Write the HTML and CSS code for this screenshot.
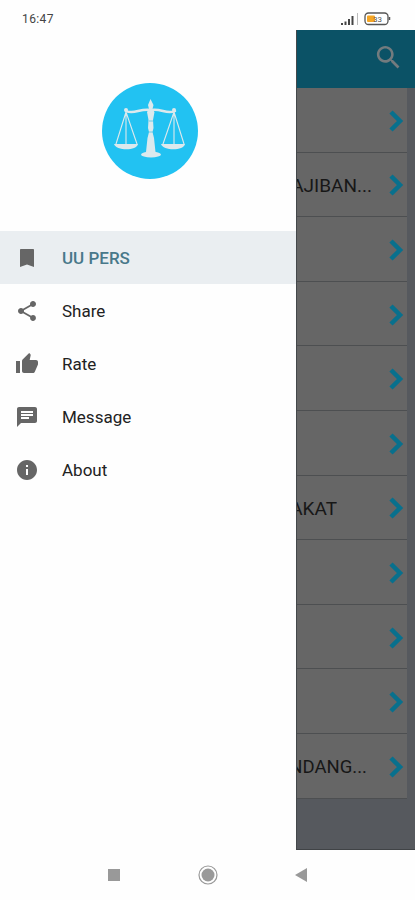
FILE: index.html
```
<!DOCTYPE html>
<html lang="id">
<head>
<meta charset="utf-8">
<title>UU PERS</title>
<link rel="stylesheet" href="styles.css">
</head>
<body>
<div class="status"><span class="time">16:47</span>
<svg class="status-icons" width="54" height="16" viewBox="0 0 54 16">
<g fill="#444"><path d="M2 12h2v2H2z"/><path d="M5.500 10.500h2V14h-2z"/><path d="M9 8h2v6H9z"/><path d="M12.500 5h2v9h-2z"/></g><path d="M18.500 2v12" stroke="#bbb"/>
<rect x="26" y="2" width="23" height="11.500" rx="3.500" fill="#fff" stroke="#555" stroke-width="1.300"/><path d="M50.500 6v3" stroke="#555" stroke-width="1.500"/>
<rect x="28" y="4.500" width="8" height="6.500" rx="1" fill="#f5a623"/><text x="34" y="11" class="charge">33</text></svg>
</div>
<div class="main">
<nav class="drawer">
<div class="brand">
<svg width="96" height="96" viewBox="0 0 96 96"><circle cx="48" cy="48" r="48" fill="#22c2f2"/>
<g fill="none" stroke="#dce9ed" stroke-linecap="round"><path d="M24 28c8 4 14-3 25-1 10-2 16 5 24 1" stroke-width="2.500"/><path d="M24 29L14 61M24 29v32M24 29l11 32M72 29L61 61M72 29v32M72 29l10 32" stroke-width="1.100"/></g>
<g fill="#dce9ed"><circle cx="24" cy="27" r="2"/><circle cx="72" cy="27" r="2"/><path d="M12 61h24c-1 7-22 7-24 0zM59 61h24c-1 7-22 7-24 0z"/><path d="M48.500 16l3 6-1 4 2 3-1.500 8 .5 8-1 4 1.500 6 1.500 14h-9.500l1.500-14 1.500-6-1-4 .5-8-1.500-8 2-3-1-4z"/><ellipse cx="49" cy="71.500" rx="10" ry="3"/></g>
<path d="M47 38h4M47 49h4" stroke="#6bcce9"/></svg>
</div>
<div class="item active"><svg class="icon" viewBox="0 0 24 24"><path d="M18 3H6c-.6 0-1 .4-1 1v17l7-2.500 7 2.500V4c0-.6-.4-1-1-1z"/></svg><span>UU PERS</span></div>
<div class="item"><svg class="icon" viewBox="0 0 24 24"><path d="M18 16.080c-.76 0-1.440.3-1.960.77L8.910 12.700c.05-.23.09-.46.09-.7s-.04-.47-.09-.7l7.050-4.110c.54.5 1.250.81 2.040.81 1.660 0 3-1.340 3-3s-1.340-3-3-3-3 1.340-3 3c0 .24.04.47.09.7L8.040 9.810C7.500 9.310 6.790 9 6 9c-1.660 0-3 1.340-3 3s1.340 3 3 3c.79 0 1.500-.31 2.040-.81l7.120 4.160c-.05.21-.08.43-.08.65 0 1.610 1.310 2.920 2.920 2.920s2.920-1.310 2.920-2.920-1.310-2.920-2.920-2.920z"/></svg><span>Share</span></div>
<div class="item"><svg class="icon" viewBox="0 0 24 24"><path d="M1 21h4V9H1v12zm22-11c0-1.100-.9-2-2-2h-6.310l.95-4.570.03-.32c0-.41-.17-.79-.44-1.060L14.170 1 7.590 7.590C7.220 7.950 7 8.450 7 9v10c0 1.100.9 2 2 2h9c.83 0 1.540-.5 1.840-1.220l3.020-7.050c.09-.23.14-.47.14-.73v-2z"/></svg><span>Rate</span></div>
<div class="item"><svg class="icon" viewBox="0 0 24 24"><path d="M20 2H4c-1.100 0-1.990.9-1.990 2L2 22l4-4h14c1.100 0 2-.9 2-2V4c0-1.100-.9-2-2-2zM6 9h12v2H6V9zm8 5H6v-2h8v2zm4-6H6V6h12v2z"/></svg><span>Message</span></div>
<div class="item"><svg class="icon" viewBox="0 0 24 24"><path d="M12 2C6.480 2 2 6.480 2 12s4.480 10 10 10 10-4.480 10-10S17.520 2 12 2zm1 15h-2v-6h2v6zm0-8h-2V7h2v2z"/></svg><span>About</span></div>
</nav>
<section class="page">
<header><svg class="search" viewBox="0 0 24 24"><path d="M15.500 14h-.79l-.28-.27C15.410 12.590 16 11.110 16 9.500 16 5.910 13.090 3 9.500 3S3 5.910 3 9.500 5.910 16 9.500 16c1.610 0 3.090-.59 4.230-1.570l.27.28v.79l5 4.990L20.490 19l-4.990-5zm-6 0C7.010 14 5 11.990 5 9.500S7.010 5 9.500 5 14 7.010 14 9.500 11.990 14 9.500 14z"/></svg></header>
<div class="list">
<div class="row"><span></span><svg class="chev" viewBox="0 0 16 22"><path d="M3 2l9 9-9 9"/></svg></div>
<div class="row"><span class="end1">AJIBAN...</span><svg class="chev" viewBox="0 0 16 22"><path d="M3 2l9 9-9 9"/></svg></div>
<div class="row"><span></span><svg class="chev" viewBox="0 0 16 22"><path d="M3 2l9 9-9 9"/></svg></div>
<div class="row"><span></span><svg class="chev" viewBox="0 0 16 22"><path d="M3 2l9 9-9 9"/></svg></div>
<div class="row"><span></span><svg class="chev" viewBox="0 0 16 22"><path d="M3 2l9 9-9 9"/></svg></div>
<div class="row"><span></span><svg class="chev" viewBox="0 0 16 22"><path d="M3 2l9 9-9 9"/></svg></div>
<div class="row"><span class="end2">AKAT</span><svg class="chev" viewBox="0 0 16 22"><path d="M3 2l9 9-9 9"/></svg></div>
<div class="row"><span></span><svg class="chev" viewBox="0 0 16 22"><path d="M3 2l9 9-9 9"/></svg></div>
<div class="row"><span></span><svg class="chev" viewBox="0 0 16 22"><path d="M3 2l9 9-9 9"/></svg></div>
<div class="row"><span></span><svg class="chev" viewBox="0 0 16 22"><path d="M3 2l9 9-9 9"/></svg></div>
<div class="row"><span class="end3">NDANG...</span><svg class="chev" viewBox="0 0 16 22"><path d="M3 2l9 9-9 9"/></svg></div>
</div>
</section>
</div>
<footer>
<svg width="20" height="20" viewBox="0 0 20 20"><path d="M4 4h12v12H4z" fill="#999"/></svg>
<svg width="20" height="20" viewBox="0 0 20 20"><circle cx="10" cy="10" r="9" fill="none" stroke="#999" stroke-width="1.200"/><circle cx="10" cy="10" r="6.500" fill="#999"/></svg>
<svg width="20" height="20" viewBox="0 0 20 20"><path d="M4 10l12-7v14z" fill="#999"/></svg>
</footer>
</body>
</html>
```
FILE: styles.css
```
* { box-sizing: border-box; }
body { margin: 0; width: 415px; height: 900px; overflow: hidden; display: flex; flex-direction: column; background: #fefefe; font-family: Roboto, sans-serif; }
.status { height: 30px; flex: none; display: flex; justify-content: space-between; padding: 11px 22px 0 22px; }
.time { font-size: 12px; line-height: 16px; color: #444; letter-spacing: .4px; }
.status-icons { display: block; }
.charge { font-size: 8px; fill: #555; }
.main { height: 820px; flex: none; display: flex; }
.drawer { width: 296px; flex: none; background: #fefefe; }
.brand { height: 201px; padding: 53px 0 0 102px; }
.brand svg { display: block; }
.item { height: 53.1px; display: flex; align-items: center; padding-left: 15px; font-size: 17px; letter-spacing: 0; color: #222; }
.item .icon { width: 24px; height: 24px; margin-right: 23px; fill: #666; }
.active { background: #eaeef1; color: #48788a; font-weight: 500; }
.page { flex: 1; min-width: 0; background: #56595e; border-left: 1px solid #44484b; border-bottom: 1px solid #404346; }
header { height: 58px; background: #0b5266; display: flex; justify-content: flex-end; padding: 12px 11px 0 0; }
.search { width: 31px; height: 31px; fill: #737b7e; }
.list { width: 110px; background: #666; }
.row { height: 64.6px; border-bottom: 1px solid #4d4f51; display: flex; align-items: center; justify-content: space-between; padding: 2px 3px 0 0; }
.row span { width: 76px; overflow: hidden; display: flex; justify-content: flex-end; white-space: nowrap; font-size: 19px; color: #171717; letter-spacing: 0; }
.row .end1 { width: 75px; }
.row .end2 { width: 40px; }
.row .end3 { width: 70px; font-size: 18.5px; }
.chev { width: 16px; height: 22px; flex: none; fill: none; stroke: #08708d; stroke-width: 4.5; }
footer { flex: 1; display: flex; align-items: center; justify-content: space-between; padding: 0 104px 0 104px; }
```
